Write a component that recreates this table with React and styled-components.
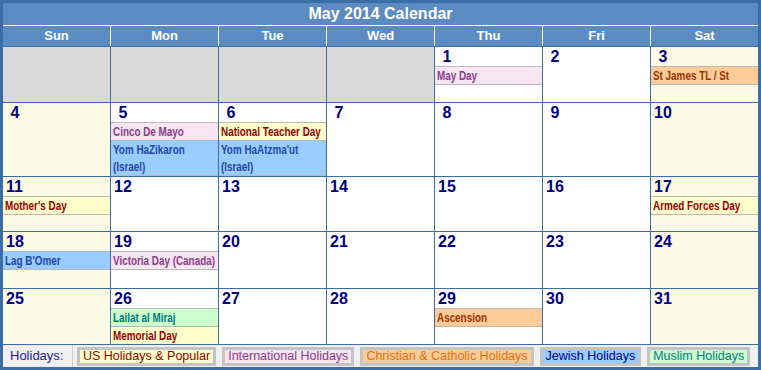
import React from "react";
import styled, { createGlobalStyle } from "styled-components";

const GlobalStyle = createGlobalStyle`
  body {
    margin: 0;
    font-family: "Liberation Sans", Arial, sans-serif;
    background: #ffffff;
  }
`;

const LINE = "#3b6ca4";
const HEAD = "#5b8bc0";

const kinds = {
  us: { bg: "#ffffcc", fg: "#990000", legend: "#990000" },
  intl: { bg: "#f7e5f0", fg: "#8a3c8a", legend: "#8a3c8a" },
  chr: { bg: "#ffcc99", fg: "#993300", legend: "#e07010" },
  jew: { bg: "#99ccff", fg: "#1f47a8", legend: "#000080" },
  mus: { bg: "#ccffcc", fg: "#007a7a", legend: "#008080" },
};

const weeks = [
  [
    null,
    null,
    null,
    null,
    { d: 1, h: [["intl", "May Day"]] },
    { d: 2 },
    { d: 3, h: [["chr", "St James TL / St"]] },
  ],
  [
    { d: 4 },
    { d: 5, h: [["intl", "Cinco De Mayo"], ["jew", "Yom HaZikaron", "(Israel)"]] },
    { d: 6, h: [["us", "National Teacher Day"], ["jew", "Yom HaAtzma'ut", "(Israel)"]] },
    { d: 7 },
    { d: 8 },
    { d: 9 },
    { d: 10 },
  ],
  [
    { d: 11, h: [["us", "Mother's Day"]] },
    { d: 12 },
    { d: 13 },
    { d: 14 },
    { d: 15 },
    { d: 16 },
    { d: 17, h: [["us", "Armed Forces Day"]] },
  ],
  [
    { d: 18, h: [["jew", "Lag B'Omer"]] },
    { d: 19, h: [["intl", "Victoria Day (Canada)"]] },
    { d: 20 },
    { d: 21 },
    { d: 22 },
    { d: 23 },
    { d: 24 },
  ],
  [
    { d: 25 },
    { d: 26, h: [["mus", "Lailat al Miraj"], ["us", "Memorial Day"]] },
    { d: 27 },
    { d: 28 },
    { d: 29, h: [["chr", "Ascension"]] },
    { d: 30 },
    { d: 31 },
  ],
];

const days = ["Sun", "Mon", "Tue", "Wed", "Thu", "Fri", "Sat"];

const legend = [
  ["us", "US Holidays & Popular"],
  ["intl", "International Holidays"],
  ["chr", "Christian & Catholic Holidays"],
  ["jew", "Jewish Holidays"],
  ["mus", "Muslim Holidays"],
];

function App() {
  return (
    <>
      <GlobalStyle />
      <Frame>
        <Title>May 2014 Calendar</Title>
        <HeaderRow>
          {days.map((d) => (
            <HeaderCell key={d}>{d}</HeaderCell>
          ))}
        </HeaderRow>
        <Grid>
          {weeks.map((week, wi) =>
            week.map((cell, ci) => {
              const weekend = ci === 0 || ci === 6;
              if (!cell) return <Cell key={wi + "-" + ci} $empty />;
              return (
                <Cell key={wi + "-" + ci} $weekend={weekend}>
                  <DayNum>
                    {cell.d < 10 ? "\u00a0" : ""}
                    {cell.d}
                  </DayNum>
                  {cell.h && (
                    <HolidayList>
                      {cell.h.map(([k, t, t2]) => (
                        <Holiday key={t} $kind={k}>
                          <Narrow>{t}</Narrow>
                          {t2 && (
                            <>
                              <br />
                              <Narrow>{t2}</Narrow>
                            </>
                          )}
                        </Holiday>
                      ))}
                    </HolidayList>
                  )}
                </Cell>
              );
            })
          )}
        </Grid>
        <Footer>
          <FooterLabel>Holidays:</FooterLabel>
          <LegendRow>
            {legend.map(([k, t]) => (
              <LegendBox key={k} $kind={k}>
                {t}
              </LegendBox>
            ))}
          </LegendRow>
        </Footer>
      </Frame>
    </>
  );
}

export default App;

const Frame = styled.div`
  width: 761px;
  height: 370px;
  box-sizing: border-box;
  border: 3px solid ${LINE};
  display: flex;
  flex-direction: column;
  background: #ffffff;
`;

const Title = styled.div`
  height: 22px;
  background: ${HEAD};
  border-bottom: 1px solid #ffffff;
  color: #ffffff;
  font-weight: bold;
  font-size: 16px;
  line-height: 22px;
  text-align: center;
`;

const HeaderRow = styled.div`
  display: grid;
  grid-template-columns: repeat(7, 1fr);
  gap: 1px;
  background: #ffffff;
  height: 20px;
`;

const HeaderCell = styled.div`
  background: ${HEAD};
  color: #ffffff;
  font-weight: bold;
  font-size: 13px;
  line-height: 20px;
  text-align: center;
`;

const Grid = styled.div`
  display: grid;
  grid-template-columns: repeat(7, 1fr);
  grid-template-rows: 55px 73px 54px 56px 55px;
  gap: 1px;
  background: ${LINE};
  border-top: 1px solid ${LINE};
  border-bottom: 1px solid ${LINE};
`;

const Cell = styled.div`
  background: ${(p) => (p.$empty ? "#d9d9d9" : p.$weekend ? "#fafae5" : "#ffffff")};
  overflow: hidden;
  display: flex;
  flex-direction: column;
`;

const DayNum = styled.div`
  height: 19px;
  padding-left: 3px;
  font-size: 16px;
  line-height: 20px;
  font-weight: bold;
  color: #000080;
`;

const HolidayList = styled.div`
  display: flex;
  flex-direction: column;
`;

const Holiday = styled.div`
  background: ${(p) => kinds[p.$kind].bg};
  color: ${(p) => kinds[p.$kind].fg};
  border-top: 1px solid #b9b9b9;
  font-weight: bold;
  font-size: 13px;
  line-height: 17px;
  padding-left: 2px;
  white-space: nowrap;
  overflow: hidden;

  &:last-child {
    border-bottom: 1px solid #b9b9b9;
  }
`;

const Narrow = styled.span`
  display: inline-block;
  transform: scaleX(0.76);
  transform-origin: left center;
`;

const Footer = styled.div`
  flex: 1;
  display: flex;
  align-items: center;
  background: #f0f0f0;
`;

const FooterLabel = styled.div`
  width: 62px;
  height: 100%;
  padding-left: 7px;
  border-right: 1px solid #cfcfcf;
  color: #1a1aa8;
  font-size: 13px;
  line-height: 22px;
`;

const LegendRow = styled.div`
  display: flex;
  align-items: center;
  gap: 6px;
  padding-left: 4px;
`;

const LegendBox = styled.div`
  background: ${(p) => kinds[p.$kind].bg};
  color: ${(p) => kinds[p.$kind].legend};
  border: 3px solid #c4c4c4;
  padding: 0 3px;
  font-size: 12.5px;
  line-height: 13px;
  white-space: nowrap;
`;
